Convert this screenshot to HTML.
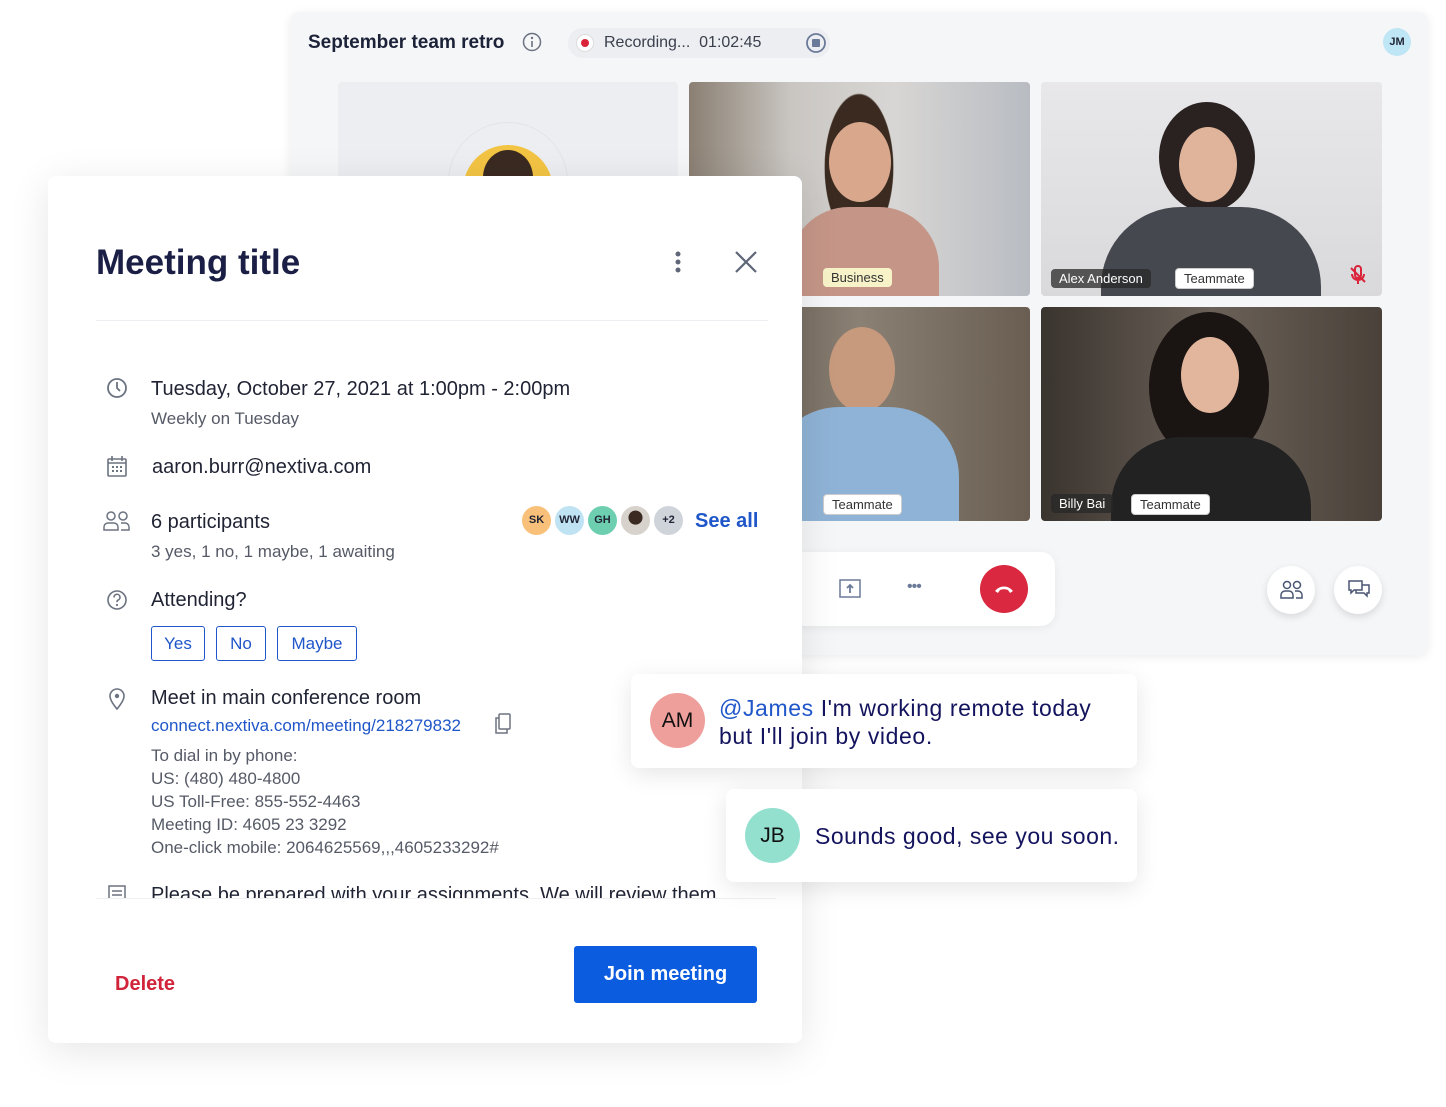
<!DOCTYPE html>
<html><head><meta charset="utf-8"><style>
*{box-sizing:border-box;margin:0;padding:0}
body{width:1446px;height:1107px;background:#fff;position:relative;overflow:hidden;font-family:"Liberation Sans",sans-serif;color:#1f2333}
.abs{position:absolute}
.panel{left:290px;top:12px;width:1138px;height:643px;background:#f5f6f8;border-radius:10px;box-shadow:0 2px 10px rgba(0,0,0,.08)}
.tile{position:absolute;border-radius:4px;overflow:hidden}
.tag{position:absolute;font-size:13px;padding:2px 8px;border-radius:4px}
.tl{background:#f7f2c8;color:#333}
.td{background:rgba(40,40,40,.75);color:#fff}
.tw{background:#fff;color:#333;border:1px solid #ccc}
.modal{left:48px;top:176px;width:754px;height:867px;background:#fff;border-radius:8px;box-shadow:0 8px 40px rgba(0,0,0,.10)}
.txt{position:absolute;white-space:nowrap}
.btn{position:absolute;border:1.5px solid #1f56c9;border-radius:3px;color:#1f56c9;font-size:17px;text-align:center;line-height:34px;height:35px}
.av{position:absolute;width:33px;height:33px;border-radius:50%;font-size:11px;font-weight:bold;text-align:center;line-height:29px;border:2px solid #fff}
.chat{position:absolute;background:#fff;border-radius:8px;box-shadow:0 6px 24px rgba(0,0,0,.10)}
.circ{position:absolute;border-radius:50%;text-align:center}
.gray{color:#555a66}
</style></head><body>

<div class="abs panel">
  <div class="txt" style="left:18px;top:20px;font-size:19px;font-weight:bold;color:#1c2238">September team retro</div>
  <svg class="abs" style="left:232px;top:20px" width="20" height="20"><circle cx="10" cy="10" r="8.5" fill="none" stroke="#6b7280" stroke-width="1.5"/><circle cx="10" cy="6" r="1.2" fill="#6b7280"/><path d="M10 9v6" stroke="#6b7280" stroke-width="1.6"/></svg>
  <div class="abs" style="left:278px;top:16px;width:262px;height:30px;background:#eceef2;border-radius:15px"></div>
  <div class="circ" style="left:286px;top:22px;width:18px;height:18px;background:#fff;border:1px solid #ddd"></div>
  <div class="circ" style="left:291px;top:27px;width:8px;height:8px;background:#d9243a"></div>
  <div class="txt" style="left:314px;top:22px;font-size:16px;color:#3a3f4b">Recording...&nbsp;&nbsp;01:02:45</div>
  <svg class="abs" style="left:515px;top:20px" width="22" height="22"><circle cx="11" cy="11" r="9" fill="none" stroke="#6b7a99" stroke-width="1.8"/><rect x="7" y="7" width="8" height="8" rx="1" fill="#6b7a99"/></svg>
  <div class="circ" style="left:1093px;top:16px;width:28px;height:28px;background:#bfe6f5;font-size:11px;font-weight:bold;line-height:28px">JM</div>

  <div class="tile" style="left:48px;top:70px;width:340px;height:214px;background:#eceef2">
    <div class="circ" style="left:110px;top:40px;width:120px;height:120px;border:1px solid #e2e4e8"></div>
    <div class="circ" style="left:125px;top:63px;width:90px;height:90px;background:#f3c443"></div>
    <div class="circ" style="left:145px;top:68px;width:50px;height:55px;background:#3a2a22"></div>
  </div>
  <div class="tile" style="left:399px;top:70px;width:341px;height:214px;background:linear-gradient(90deg,#8a7f72 0%,#c9c6c2 30%,#d8d6d4 60%,#b8bcc2 100%)">
    <div class="abs" style="left:110px;top:0;width:120px;height:214px;background:radial-gradient(ellipse at 50% 40%,#3a2a20 0,#3a2a20 40%,transparent 41%)"></div>
    <div class="circ" style="left:140px;top:40px;width:62px;height:80px;background:#d9a88c"></div>
    <div class="abs" style="left:100px;top:125px;width:150px;height:100px;background:#c59688;border-radius:60px 60px 0 0"></div>
    <div class="tag tl" style="left:134px;top:186px">Business</div>
  </div>
  <div class="tile" style="left:751px;top:70px;width:341px;height:214px;background:linear-gradient(180deg,#e8e8ea,#d9d9dc)">
    <div class="circ" style="left:118px;top:20px;width:96px;height:110px;background:#2a2220"></div>
    <div class="circ" style="left:138px;top:45px;width:58px;height:75px;background:#e0b49a"></div>
    <div class="abs" style="left:60px;top:125px;width:220px;height:100px;background:#45484f;border-radius:80px 80px 0 0"></div>
    <div class="tag td" style="left:10px;top:187px">Alex Anderson</div>
    <div class="tag tw" style="left:134px;top:186px">Teammate</div>
    <svg class="abs" style="left:306px;top:182px" width="22" height="22"><path d="M8 5a3 3 0 0 1 6 0v6a3 3 0 0 1-6 0z M5 10a6 6 0 0 0 12 0 M11 16v4 M4 4l14 14" stroke="#d9243a" stroke-width="2" fill="none"/></svg>
  </div>
  <div class="tile" style="left:399px;top:295px;width:341px;height:214px;background:linear-gradient(90deg,#5a4e44,#8a8074 50%,#6a5e52)">
    <div class="circ" style="left:140px;top:20px;width:66px;height:85px;background:#c79a7e"></div>
    <div class="abs" style="left:80px;top:100px;width:190px;height:120px;background:#8fb3d6;border-radius:70px 70px 0 0"></div>
    <div class="tag tw" style="left:134px;top:187px">Teammate</div>
  </div>
  <div class="tile" style="left:751px;top:295px;width:341px;height:214px;background:linear-gradient(90deg,#3a342e,#6a6058 50%,#4a423a)">
    <div class="circ" style="left:108px;top:5px;width:120px;height:150px;background:#1a1412"></div>
    <div class="circ" style="left:140px;top:30px;width:58px;height:76px;background:#e2b69c"></div>
    <div class="abs" style="left:70px;top:130px;width:200px;height:100px;background:#222;border-radius:70px 70px 0 0"></div>
    <div class="tag td" style="left:10px;top:187px">Billy Bai</div>
    <div class="tag tw" style="left:90px;top:187px">Teammate</div>
  </div>

  <div class="abs" style="left:500px;top:540px;width:265px;height:74px;background:#fff;border-radius:14px;box-shadow:0 2px 10px rgba(0,0,0,.06)"></div>
  <svg class="abs" style="left:549px;top:567px" width="22" height="20"><rect x="1" y="1" width="20" height="17" fill="none" stroke="#6b7a99" stroke-width="1.5"/><path d="M11 14V6 M8 9l3-3 3 3" stroke="#6b7a99" stroke-width="1.8" fill="none"/></svg>
  <div class="txt" style="left:617px;top:566px;font-size:16px;color:#6b7a99;letter-spacing:-1px">•••</div>
  <div class="circ" style="left:690px;top:553px;width:48px;height:48px;background:#d9283f"></div>
  <svg class="abs" style="left:703px;top:570px" width="22" height="14"><path d="M2 9c5-6 13-6 18 0l-3 2-2-3c-3-1-5-1-8 0l-2 3z" fill="#fff"/></svg>
  <div class="circ" style="left:977px;top:554px;width:48px;height:48px;background:#fff;box-shadow:0 3px 8px rgba(0,0,0,.12)"></div>
  <svg class="abs" style="left:990px;top:568px" width="24" height="20"><circle cx="7" cy="5" r="3.5" fill="none" stroke="#4a5573" stroke-width="1.5"/><circle cx="17" cy="5" r="3.5" fill="none" stroke="#4a5573" stroke-width="1.5"/><path d="M1 18v-3a4 4 0 0 1 4-4h4a4 4 0 0 1 4 4v3z M15 11h3a4 4 0 0 1 4 4v3h-6" fill="none" stroke="#4a5573" stroke-width="1.5"/></svg>
  <div class="circ" style="left:1044px;top:554px;width:48px;height:48px;background:#fff;box-shadow:0 3px 8px rgba(0,0,0,.12)"></div>
  <svg class="abs" style="left:1057px;top:567px" width="24" height="22"><path d="M2 2h13v9H7l-3 3v-3H2z M9 11v3h8l3 3v-3h2V6h-7" fill="none" stroke="#4a5573" stroke-width="1.5"/></svg>
</div>

<div class="abs modal">
  <div class="txt" style="left:48px;top:67px;font-size:35px;font-weight:bold;color:#1b1f45">Meeting title</div>
  <svg class="abs" style="left:624px;top:75px" width="12" height="24"><circle cx="6" cy="3" r="2.5" fill="#5e6678"/><circle cx="6" cy="11" r="2.5" fill="#5e6678"/><circle cx="6" cy="19" r="2.5" fill="#5e6678"/></svg>
  <svg class="abs" style="left:686px;top:74px" width="24" height="24"><path d="M2 2l20 20M22 2L2 22" stroke="#5e6678" stroke-width="2.2"/></svg>
  <div class="abs" style="left:48px;top:144px;width:672px;height:1px;background:#eceef1"></div>

  <svg class="abs" style="left:58px;top:201px" width="22" height="22"><circle cx="11" cy="11" r="9" fill="none" stroke="#6b7280" stroke-width="1.8"/><path d="M11 5v6l3 3" stroke="#6b7280" stroke-width="1.8" fill="none"/></svg>
  <div class="txt" style="left:103px;top:202px;font-size:20px">Tuesday, October 27, 2021 at 1:00pm - 2:00pm</div>
  <div class="txt gray" style="left:103px;top:233px;font-size:17px">Weekly on Tuesday</div>

  <svg class="abs" style="left:59px;top:279px" width="20" height="22"><rect x="1" y="4" width="18" height="17" rx="1" fill="none" stroke="#6b7280" stroke-width="1.6"/><path d="M1 8h18 M5 1v5 M15 1v5" stroke="#6b7280" stroke-width="1.6"/><g fill="#6b7280"><rect x="5" y="11" width="2" height="2"/><rect x="9" y="11" width="2" height="2"/><rect x="13" y="11" width="2" height="2"/><rect x="5" y="15" width="2" height="2"/><rect x="9" y="15" width="2" height="2"/><rect x="13" y="15" width="2" height="2"/></g></svg>
  <div class="txt" style="left:104px;top:280px;font-size:20px">aaron.burr@nextiva.com</div>

  <svg class="abs" style="left:55px;top:334px" width="28" height="22"><circle cx="8" cy="6" r="4" fill="none" stroke="#6b7280" stroke-width="1.5"/><circle cx="20" cy="6" r="4" fill="none" stroke="#6b7280" stroke-width="1.5"/><path d="M1 20v-3a4 4 0 0 1 4-4h6a4 4 0 0 1 4 4v3z M18 13h4a4 4 0 0 1 4 4v3h-8" fill="none" stroke="#6b7280" stroke-width="1.5"/></svg>
  <div class="txt" style="left:103px;top:335px;font-size:20px">6 participants</div>
  <div class="txt gray" style="left:103px;top:366px;font-size:17px">3 yes, 1 no, 1 maybe, 1 awaiting</div>
  <div class="av" style="left:472px;top:328px;background:#f9c07a">SK</div>
  <div class="av" style="left:505px;top:328px;background:#bfe3f2">WW</div>
  <div class="av" style="left:538px;top:328px;background:#6dcfb0">GH</div>
  <div class="av" style="left:571px;top:328px;background:radial-gradient(circle at 50% 40%,#3a2a22 0 30%,#d8d2cc 32%)"></div>
  <div class="av" style="left:604px;top:328px;background:#cfd4db">+2</div>
  <div class="txt" style="left:647px;top:334px;font-size:20px;font-weight:bold;color:#1f56c9">See all</div>

  <svg class="abs" style="left:58px;top:413px" width="22" height="22"><circle cx="11" cy="11" r="9" fill="none" stroke="#6b7280" stroke-width="1.6"/><path d="M8 8.5a3 3 0 1 1 4 2.6c-.8.4-1 1-1 2" stroke="#6b7280" stroke-width="1.6" fill="none"/><circle cx="11" cy="16" r="1.1" fill="#6b7280"/></svg>
  <div class="txt" style="left:103px;top:413px;font-size:20px">Attending?</div>
  <div class="btn" style="left:103px;top:450px;width:54px">Yes</div>
  <div class="btn" style="left:168px;top:450px;width:50px">No</div>
  <div class="btn" style="left:229px;top:450px;width:80px">Maybe</div>

  <svg class="abs" style="left:60px;top:511px" width="18" height="24"><path d="M9 22c-5-6-7-10-7-13a7 7 0 0 1 14 0c0 3-2 7-7 13z" fill="none" stroke="#6b7280" stroke-width="1.6"/><circle cx="9" cy="9" r="2.2" fill="#6b7280"/></svg>
  <div class="txt" style="left:103px;top:511px;font-size:20px">Meet in main conference room</div>
  <div class="txt" style="left:103px;top:540px;font-size:17px;color:#1f56c9">connect.nextiva.com/meeting/218279832</div>
  <svg class="abs" style="left:446px;top:537px" width="18" height="22"><rect x="5" y="1" width="11" height="15" rx="1" fill="none" stroke="#6b7280" stroke-width="1.5"/><path d="M5 5H2v15h11v-4" fill="none" stroke="#6b7280" stroke-width="1.5"/></svg>
  <div class="txt gray" style="left:103px;top:568px;font-size:17px;line-height:23px">To dial in by phone:<br>US: (480) 480-4800<br>US Toll-Free: 855-552-4463<br>Meeting ID: 4605 23 3292<br>One-click mobile: 2064625569,,,4605233292#</div>

  <div class="abs" style="left:0;top:700px;width:754px;height:22px;overflow:hidden">
    <svg class="abs" style="left:60px;top:9px" width="18" height="20"><rect x="1" y="1" width="16" height="18" fill="none" stroke="#6b7280" stroke-width="1.5"/><path d="M4 6h10M4 10h10M4 14h6" stroke="#6b7280" stroke-width="1.5"/></svg>
    <div class="txt" style="left:103px;top:8px;font-size:20px">Please be prepared with your assignments. We will review them</div>
  </div>
  <div class="abs" style="left:48px;top:722px;width:680px;height:1px;background:#eef0f3"></div>

  <div class="txt" style="left:67px;top:797px;font-size:20px;font-weight:bold;color:#d1243a">Delete</div>
  <div class="abs" style="left:526px;top:770px;width:183px;height:57px;background:#0b5cdf;border-radius:3px;color:#fff;font-size:20px;font-weight:bold;text-align:center;line-height:57px">Join meeting</div>
</div>

<div class="chat" style="left:631px;top:674px;width:506px;height:94px">
  <div class="circ" style="left:19px;top:19px;width:55px;height:55px;background:#ef9f9b;font-size:21px;line-height:55px;color:#111">AM</div>
  <div class="txt" style="left:88px;top:20px;font-size:23px;line-height:28px;color:#14145e;letter-spacing:0.6px">
    <span style="color:#1f56c9">@James</span> I'm working remote today<br>but I'll join by video.</div>
</div>
<div class="chat" style="left:726px;top:789px;width:411px;height:93px">
  <div class="circ" style="left:19px;top:19px;width:55px;height:55px;background:#93e0cf;font-size:21px;line-height:55px;color:#111">JB</div>
  <div class="txt" style="left:89px;top:34px;font-size:23px;color:#14145e;letter-spacing:0.5px">Sounds good, see you soon.</div>
</div>
</body></html>
